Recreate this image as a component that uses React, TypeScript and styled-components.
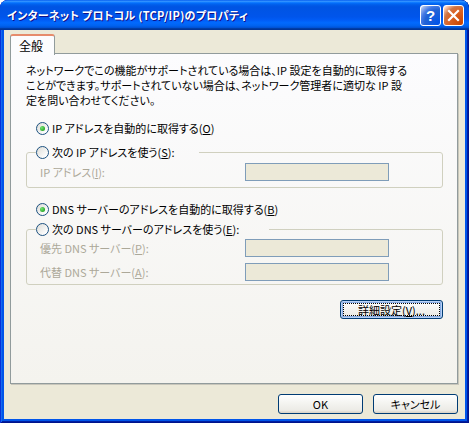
import React from "react";
import styled, { createGlobalStyle } from "styled-components";

const GlobalStyle = createGlobalStyle`
  html, body {
    margin: 0;
    padding: 0;
    background: #ffffff;
  }
  body {
    font-family: "Noto Sans CJK JP", "Liberation Sans", sans-serif;
    font-size: 11px;
    font-feature-settings: "palt";
  }
`;

const Window = styled.div`
  width: 469px;
  height: 423px;
  display: flex;
  flex-direction: column;
  box-sizing: border-box;
  background: #0055ea;
  border-radius: 8px 8px 0 0;
  overflow: hidden;
  box-shadow: inset 1px 0 #0831d9, inset -1px 0 #00138c, inset 0 -1px #00138c,
    inset 2px 0 #166aee, inset -2px 0 #001ea0, inset 0 -2px #001ea0;
`;

const TitleBar = styled.div`
  height: 30px;
  flex: none;
  display: flex;
  align-items: center;
  justify-content: space-between;
  padding: 0 5px 0 7px;
  border-radius: 8px 8px 0 0;
  background: linear-gradient(
    180deg,
    #0058ee 0%,
    #3593ff 4%,
    #288eff 6%,
    #127dff 8%,
    #036ffc 10%,
    #0262ee 14%,
    #0057e5 20%,
    #0054e3 24%,
    #0055eb 56%,
    #005bf5 66%,
    #026afe 76%,
    #0062ef 86%,
    #0052d6 92%,
    #0040ab 94%,
    #003092 100%
  );
`;

const Title = styled.span`
  color: #ffffff;
  font-weight: bold;
  font-size: 11px;
  letter-spacing: 0.3px;
  text-shadow: 1px 1px #0f1089;
  white-space: nowrap;
`;

const Controls = styled.div`
  display: flex;
  gap: 2px;
`;

const CaptionButton = styled.div<{ $close?: boolean }>`
  width: 21px;
  height: 21px;
  box-sizing: border-box;
  border: 1px solid #ffffff;
  border-radius: 3px;
  display: flex;
  align-items: center;
  justify-content: center;
  color: #ffffff;
  font-weight: bold;
  font-size: 15px;
  font-family: "Liberation Sans", sans-serif;
  background: ${(p) =>
    p.$close
      ? "radial-gradient(circle at 90% 90%, #cc4600 0%, #dc6527 55%, #cd7546 70%, #ffccb2 90%, #ffffff 100%)"
      : "radial-gradient(circle at 90% 90%, #0054e9 0%, #2263d5 55%, #4479e4 70%, #a3bbec 90%, #ffffff 100%)"};
`;

const Body = styled.div`
  flex: 1;
  display: flex;
  flex-direction: column;
  margin: 0 4px 4px;
  padding: 4px 7px 5px 6px;
  background: #ece9d8;
`;

const TabStrip = styled.div`
  display: flex;
  height: 20px;
  margin-bottom: -1px;
`;

const Tab = styled.div`
  position: relative;
  z-index: 1;
  width: 45px;
  box-sizing: border-box;
  height: 21px;
  padding-left: 8px;
  display: flex;
  align-items: center;
  font-size: 12px;
  border: 1px solid #919b9c;
  border-top: 2px solid #e68b6c;
  border-bottom: none;
  border-radius: 3px 3px 0 0;
  background: #fcfcfe;
  color: #000000;
`;

const Panel = styled.div`
  flex: 1;
  display: flex;
  flex-direction: column;
  padding: 9px 14px 0 15px;
  border: 1px solid #919b9c;
  box-shadow: 1px 1px 0 #c8c6bb;
  background: linear-gradient(180deg, #fcfcfe 0%, #f4f3ee 100%);
`;

const Description = styled.p`
  margin: 0;
  line-height: 15px;
  white-space: nowrap;
  color: #000000;
`;

const RadioRow = styled.label<{ $mt?: number; $ml?: number }>`
  display: flex;
  align-items: center;
  gap: 3px;
  height: 14px;
  margin-top: ${(p) => p.$mt ?? 0}px;
  margin-left: ${(p) => p.$ml ?? 0}px;
  white-space: nowrap;
  color: #000000;
`;

const RadioCircle = styled.span`
  width: 13px;
  height: 13px;
  flex: none;
  box-sizing: border-box;
  border: 1px solid #1c5180;
  border-radius: 50%;
  background: linear-gradient(135deg, #dcdcd7 0%, #ffffff 85%);
  display: flex;
  align-items: center;
  justify-content: center;
`;

const RadioDot = styled.span`
  width: 5px;
  height: 5px;
  border-radius: 50%;
  background: radial-gradient(circle at 35% 35%, #75e575 0%, #21a121 80%);
`;

const Group = styled.fieldset<{ $mt: number }>`
  margin: ${(p) => p.$mt}px 0 0;
  padding: 0;
  border: 1px solid #d0d0bf;
  border-radius: 3px;
  min-width: 0;
`;

const Legend = styled.legend<{ $pr: number }>`
  margin-left: 9px;
  padding: 0 ${(p) => p.$pr}px 0 0;
`;

const FieldGrid = styled.div<{ $pt: number; $pb: number }>`
  display: grid;
  grid-template-columns: 205px 144px;
  row-gap: 6px;
  align-items: center;
  padding: ${(p) => p.$pt}px 0 ${(p) => p.$pb}px 13px;
`;

const FieldLabel = styled.span`
  color: #aca899;
  white-space: nowrap;
`;

const Field = styled.div`
  height: 18px;
  box-sizing: border-box;
  border: 1px solid #7f9db9;
  background: #ece9d8;
`;

const XpButton = styled.button<{ $w: number; $focus?: boolean }>`
  width: ${(p) => p.$w}px;
  height: ${(p) => (p.$focus ? 19 : 20)}px;
  padding: 2px;
  box-sizing: border-box;
  border: 1px solid #003c74;
  border-radius: 3px;
  font: inherit;
  font-size: 11px;
  color: #000000;
  display: flex;
  background: linear-gradient(180deg, #ffffff 0%, #f3f3ef 50%, #ecebe6 85%, #d6d0c5 100%);
  box-shadow: ${(p) =>
    p.$focus ? "inset 0 0 0 1px #b8d2f6, inset 0 0 0 2px #89ade4" : "none"};
`;

const ButtonFace = styled.span<{ $focus?: boolean }>`
  flex: 1;
  display: flex;
  align-items: center;
  justify-content: center;
  border: 1px dotted ${(p) => (p.$focus ? "#000000" : "transparent")};
  white-space: nowrap;
`;

const AdvancedRow = styled.div`
  display: flex;
  justify-content: flex-end;
  margin-top: 15px;
`;

const ButtonRow = styled.div`
  display: flex;
  justify-content: flex-end;
  gap: 10px;
  margin-top: 10px;
`;

function Radio({ checked }: { checked?: boolean }) {
  return <RadioCircle>{checked && <RadioDot />}</RadioCircle>;
}

export default function App() {
  return (
    <>
      <GlobalStyle />
      <Window>
        <TitleBar>
          <Title>インターネット プロトコル (TCP/IP)のプロパティ</Title>
          <Controls>
            <CaptionButton>?</CaptionButton>
            <CaptionButton $close>
              <svg width="13" height="13" viewBox="0 0 13 13">
                <path d="M2 2 L11 11 M11 2 L2 11" stroke="#ffffff" strokeWidth="2.2" strokeLinecap="square" />
              </svg>
            </CaptionButton>
          </Controls>
        </TitleBar>
        <Body>
          <TabStrip>
            <Tab>全般</Tab>
          </TabStrip>
          <Panel>
            <Description>
              ネットワークでこの機能がサポートされている場合は、IP 設定を自動的に取得する
              <br />
              ことができます。サポートされていない場合は、ネットワーク管理者に適切な IP 設
              <br />
              定を問い合わせてください。
            </Description>

            <RadioRow $mt={13} $ml={10}>
              <Radio checked />
              <span>
                IP アドレスを自動的に取得する(<u>O</u>)
              </span>
            </RadioRow>

            <Group $mt={10}>
              <Legend $pr={24}>
                <RadioRow>
                  <Radio />
                  <span>
                    次の IP アドレスを使う(<u>S</u>):
                  </span>
                </RadioRow>
              </Legend>
              <FieldGrid $pt={4} $pb={6}>
                <FieldLabel>
                  IP アドレス(<u>I</u>):
                </FieldLabel>
                <Field />
              </FieldGrid>
            </Group>

            <RadioRow $mt={14} $ml={10}>
              <Radio checked />
              <span>
                DNS サーバーのアドレスを自動的に取得する(<u>B</u>)
              </span>
            </RadioRow>

            <Group $mt={6}>
              <Legend $pr={30}>
                <RadioRow>
                  <Radio />
                  <span>
                    次の DNS サーバーのアドレスを使う(<u>E</u>):
                  </span>
                </RadioRow>
              </Legend>
              <FieldGrid $pt={3} $pb={3}>
                <FieldLabel>
                  優先 DNS サーバー(<u>P</u>):
                </FieldLabel>
                <Field />
                <FieldLabel>
                  代替 DNS サーバー(<u>A</u>):
                </FieldLabel>
                <Field />
              </FieldGrid>
            </Group>

            <AdvancedRow>
              <XpButton $w={103} $focus>
                <ButtonFace $focus>
                  詳細設定(<u>V</u>)...
                </ButtonFace>
              </XpButton>
            </AdvancedRow>
          </Panel>
          <ButtonRow>
            <XpButton $w={85}>
              <ButtonFace>OK</ButtonFace>
            </XpButton>
            <XpButton $w={85}>
              <ButtonFace>キャンセル</ButtonFace>
            </XpButton>
          </ButtonRow>
        </Body>
      </Window>
    </>
  );
}
